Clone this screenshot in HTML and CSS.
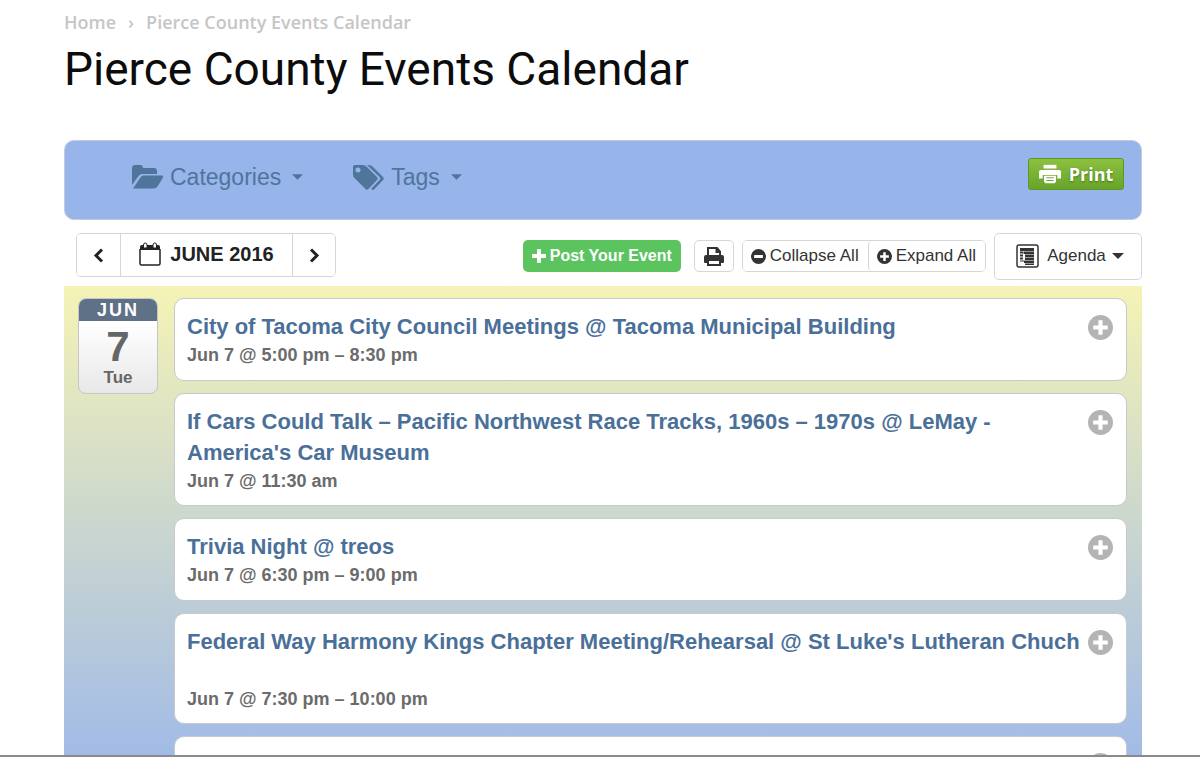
FILE: index.html
```html
<!DOCTYPE html>
<html lang="en">
<head>
<meta charset="utf-8">
<title>Pierce County Events Calendar</title>
<link rel="stylesheet" href="styles.css">
</head>
<body>
<svg class="defs" width="0" height="0" aria-hidden="true">
  <symbol id="plus-circle" viewBox="0 0 24 24"><path fill-rule="evenodd" d="M12 0a12 12 0 1 0 0 24a12 12 0 0 0 0-24zM10 5h4v5h5v4h-5v5h-4v-5H5v-4h5z"/></symbol>
  <symbol id="minus-circle" viewBox="0 0 24 24"><path fill-rule="evenodd" d="M12 0a12 12 0 1 0 0 24a12 12 0 0 0 0-24zM5 9.500h14v5H5z"/></symbol>
  <symbol id="caret" viewBox="0 0 12 6"><path d="M0 0h12l-6 6z"/></symbol>
</svg>
<div class="page">
  <nav class="breadcrumb" aria-label="Breadcrumb">
    <a href="#">Home</a><span class="sep">›</span><a href="#">Pierce County Events Calendar</a>
  </nav>
  <h1>Pierce County Events Calendar</h1>

  <div class="filters">
    <button class="filter" type="button">
      <svg width="31" height="24" viewBox="0 0 31 24"><path d="M0 20V3q0-3 3-3h5q3 0 3 3h11q3 0 3 3v3H10q-2 0-3.500 2z"/><path d="M1 23.500l7.500-11q1-2 3-2h18q2.500 0 1.500 2l-5.500 9q-1.500 2-3.500 2z"/></svg>
      <span>Categories</span>
      <svg class="caret" width="11" height="6"><use href="#caret"/></svg>
    </button>
    <button class="filter" type="button">
      <svg width="31" height="25" viewBox="0 0 31 25"><path fill-rule="evenodd" d="M0 2q0-2 2-2h8q2 0 4 2l10 10q1.500 1.500 0 3l-8.500 9q-1.500 1.500-3 0L2 13.500Q0 11.500 0 9.500zM5 2.500a2.500 2.500 0 1 0 0 5a2.500 2.500 0 0 0 0-5z"/><path d="M14 0h2q2 0 4 2l10 10q1.500 1.500 0 3l-9 9.500q-1 .8-2.500 0L18.500 23.500l8.500-9q.8-1 0-2z"/></svg>
      <span>Tags</span>
      <svg class="caret" width="11" height="6"><use href="#caret"/></svg>
    </button>
    <button class="print" type="button">
      <svg width="22" height="20" viewBox="0 0 24 20" fill="#fff"><path d="M5 0h14v4H5z"/><path d="M2 5.500h20q2 0 2 2V15h-4v-4H4v4H0V7.500q0-2 2-2z"/><path fill-rule="evenodd" d="M5.500 12h13v6q0 2-2 2h-9q-2 0-2-2zM8 13.500v1.200h8v-1.200zM8 16.500v1.200h8v-1.200z"/></svg>
      <span>Print</span>
    </button>
  </div>

  <div class="toolbar">
    <div class="group month">
      <button type="button" aria-label="Previous month"><svg width="11" height="15" viewBox="0 0 11 15"><path class="chev" d="M9 1.500l-6 6 6 6"/></svg></button>
      <button class="current" type="button">
        <svg width="22" height="24" viewBox="0 0 22 24"><path d="M1 8V5q0-2 2-2h16q2 0 2 2v3z"/><path class="thin" d="M1 7v14.500q0 1.500 1.500 1.500h17q1.500 0 1.500-1.500V7"/><path class="ring" d="M4.500 6V3q0-2 1.800-2T8 3v3zM14 6V3q0-2 1.800-2t1.700 2v3z"/></svg>
        <span>JUNE 2016</span>
      </button>
      <button type="button" aria-label="Next month"><svg width="11" height="15" viewBox="0 0 11 15"><path class="chev" d="M2 1.500l6 6-6 6"/></svg></button>
    </div>
    <div class="actions">
      <button class="post" type="button"><svg width="14" height="14" viewBox="0 0 14 14"><path d="M5 0h4v5h5v4H9v5H5V9H0V5h5z"/></svg><span>Post Your Event</span></button>
      <button class="small" type="button" aria-label="Print"><svg width="20" height="19" viewBox="0 0 20 19"><path class="line" d="M4 9V1h9l3 3.500V9M12.500 1v4h4"/><path fill-rule="evenodd" d="M2 8h16q2 0 2 2v5q0 1-1 1h-2v3H3v-3H1q-1 0-1-1v-5q0-2 2-2zM5 14v3h10v-3z"/></svg></button>
      <div class="group small-group">
        <button type="button"><svg width="15" height="15"><use href="#minus-circle"/></svg><span>Collapse All</span></button>
        <button type="button"><svg width="15" height="15"><use href="#plus-circle"/></svg><span>Expand All</span></button>
      </div>
      <button class="view" type="button">
        <svg width="23" height="24" viewBox="0 0 23 24"><rect class="thin" x="1" y="1" width="21" height="22" rx="2"/><path d="M4 4h14v3H4zM4 7.500h3v2H4zM7.500 7.500H18v2.500H7.500zM4 10.500h3v2H4zM9 10.500h9V13H9zM4 13.500h3v2H4zM9 13.500h9V16H9zM4 16.500h4v1H4zM8 16.500h10V19H8zM9 19.500h9V21H9z"/></svg>
        <span>Agenda</span>
        <svg width="12" height="6"><use href="#caret"/></svg>
      </button>
    </div>
  </div>

  <main class="agenda">
    <time class="date" datetime="2016-06-07"><span class="mon">JUN</span><span class="num">7</span><span class="day">Tue</span></time>
    <div class="events">
      <article class="event">
        <div class="text"><h2><a href="#">City of Tacoma City Council Meetings @ Tacoma Municipal Building</a></h2><p>Jun 7 @ 5:00 pm – 8:30 pm</p></div>
        <button class="more" type="button" aria-label="Expand"><svg width="25" height="25"><use href="#plus-circle"/></svg></button>
      </article>
      <article class="event">
        <div class="text"><h2><a href="#">If Cars Could Talk – Pacific Northwest Race Tracks, 1960s – 1970s @ LeMay - America's Car Museum</a></h2><p>Jun 7 @ 11:30 am</p></div>
        <button class="more" type="button" aria-label="Expand"><svg width="25" height="25"><use href="#plus-circle"/></svg></button>
      </article>
      <article class="event">
        <div class="text"><h2><a href="#">Trivia Night @ treos</a></h2><p>Jun 7 @ 6:30 pm – 9:00 pm</p></div>
        <button class="more" type="button" aria-label="Expand"><svg width="25" height="25"><use href="#plus-circle"/></svg></button>
      </article>
      <article class="event spaced">
        <div class="text"><h2><a href="#">Federal Way Harmony Kings Chapter Meeting/Rehearsal @ St Luke's Lutheran Chuch</a></h2><p>Jun 7 @ 7:30 pm – 10:00 pm</p></div>
        <button class="more" type="button" aria-label="Expand"><svg width="25" height="25"><use href="#plus-circle"/></svg></button>
      </article>
      <article class="event">
        <div class="text"></div>
        <button class="more" type="button" aria-label="Expand"><svg width="25" height="25"><use href="#plus-circle"/></svg></button>
      </article>
    </div>
  </main>
</div>
</body>
</html>
```
FILE: styles.css
```css
* { box-sizing: border-box; }
body {
  margin: 0;
  background: #fff;
  font-family: "Liberation Sans", Arial, sans-serif;
  color: #333;
}
button {
  font: inherit;
  color: inherit;
  background: #fff;
  border: 0;
  padding: 0;
  margin: 0;
  display: flex;
  align-items: center;
  justify-content: center;
  white-space: nowrap;
}
a { color: inherit; text-decoration: none; }
svg { display: block; flex: none; fill: currentColor; }
.defs { position: absolute; }
.line { fill: none; stroke: currentColor; stroke-width: 2; }
.thin { fill: none; stroke: currentColor; stroke-width: 1.5; }
.ring { fill: #fff; stroke: currentColor; stroke-width: 1; }
.chev { fill: none; stroke: currentColor; stroke-width: 3; }

.page {
  height: 100vh;
  overflow: hidden;
  display: flex;
  flex-direction: column;
  padding: 10px 58px 0 64px;
  border-bottom: 2px solid #8a8a8e;
}
.breadcrumb {
  display: flex;
  font: 600 18px/24px "Open Sans", sans-serif;
  color: #c6c6c6;
}
.sep { padding: 0 12px; }
h1 {
  margin: 5px 0 41px;
  font: 400 46px/60px Roboto, sans-serif;
  color: #0c0c0c;
}

.filters {
  flex: none;
  display: flex;
  align-items: flex-start;
  height: 80px;
  padding: 17px 17px 0 67px;
  gap: 50px;
  background: #97b4eb;
  border: 1px solid #c3cbdc;
  border-radius: 10px;
}
.filter {
  gap: 7px;
  height: 38px;
  background: none;
  color: #50759b;
  font-size: 23px;
}
.caret { margin-left: 4px; }
.print {
  margin-left: auto;
  width: 96px;
  height: 32px;
  gap: 8px;
  color: #fff;
  font: 700 18px/24px "Open Sans", sans-serif;
  text-shadow: 0 1px 2px #3d7410;
  background: linear-gradient(#8cc03f, #69a32b);
  border: 1px solid #5c9a1e;
  border-radius: 3px;
}

.toolbar {
  flex: none;
  display: flex;
  align-items: center;
  justify-content: space-between;
  margin: 12px 0 6px;
  padding-left: 12px;
  height: 48px;
}
.group, .small, .view {
  display: flex;
  border: 1px solid #d6d6d6;
  border-radius: 5px;
}
.group button + button { border-left: 1px solid #d6d6d6; }
.group button { border-radius: 4px; }
.group .current, .group .current + button { border-radius: 0 4px 4px 0; }
.month { height: 44px; margin-bottom: 2px; color: #222; }
.month button { width: 43px; }
.month .current {
  width: 172px;
  gap: 9px;
  padding-bottom: 2px;
  font-weight: 700;
  font-size: 20px;
}
.actions {
  display: flex;
  align-items: center;
  font-size: 17px;
}
.post {
  width: 158px;
  height: 32px;
  gap: 4px;
  margin-right: 13px;
  color: #fff;
  background: #5cc45f;
  border-radius: 5px;
  font-weight: 700;
  font-size: 16px;
}
.small { width: 40px; height: 32px; margin-right: 8px; }
.small-group { height: 32px; margin-right: 8px; }
.small-group button { gap: 4px; padding: 0 9px 0 8px; }
.view { width: 148px; height: 47px; gap: 8px; padding-left: 4px; }
.view svg:last-child { margin-left: -2px; }

.agenda {
  flex: 1 0 auto;
  display: flex;
  align-items: flex-start;
  gap: 16px;
  padding: 12px 15px 0 14px;
  background: linear-gradient(#f5f3b5, #a0bae8 480px);
}
.date {
  flex: none;
  width: 80px;
  height: 96px;
  display: flex;
  flex-direction: column;
  align-items: center;
  overflow: hidden;
  font-weight: 700;
  color: #666;
  background: linear-gradient(#fff 25%, #e8e8e8);
  border: 1px solid #c4c6cc;
  border-radius: 8px;
}
.mon {
  align-self: stretch;
  text-align: center;
  font-size: 18px;
  line-height: 22px;
  letter-spacing: 2px;
  color: #fff;
  background: #5f7186;
}
.num { font-size: 42px; line-height: 52px; }
.day { font-size: 17px; line-height: 10px; }
.events {
  flex: 1;
  min-width: 0;
  display: flex;
  flex-direction: column;
  gap: 12px;
}
.event {
  display: flex;
  align-items: flex-start;
  min-height: 83px;
  padding: 12px 13px 10px 12px;
  background: #fff;
  border: 1px solid #c8c9cc;
  border-radius: 10px;
}
.text { flex: 1; min-width: 0; }
h2 {
  margin: 0;
  font-size: 22px;
  line-height: 31px;
  color: #4a7099;
}
p {
  margin: 0;
  font-weight: 700;
  font-size: 18px;
  line-height: 27px;
  color: #6b6b6b;
}
.spaced p { margin-top: 29px; }
.more { margin-top: 4px; color: #b4b4b4; background: none; }
```
